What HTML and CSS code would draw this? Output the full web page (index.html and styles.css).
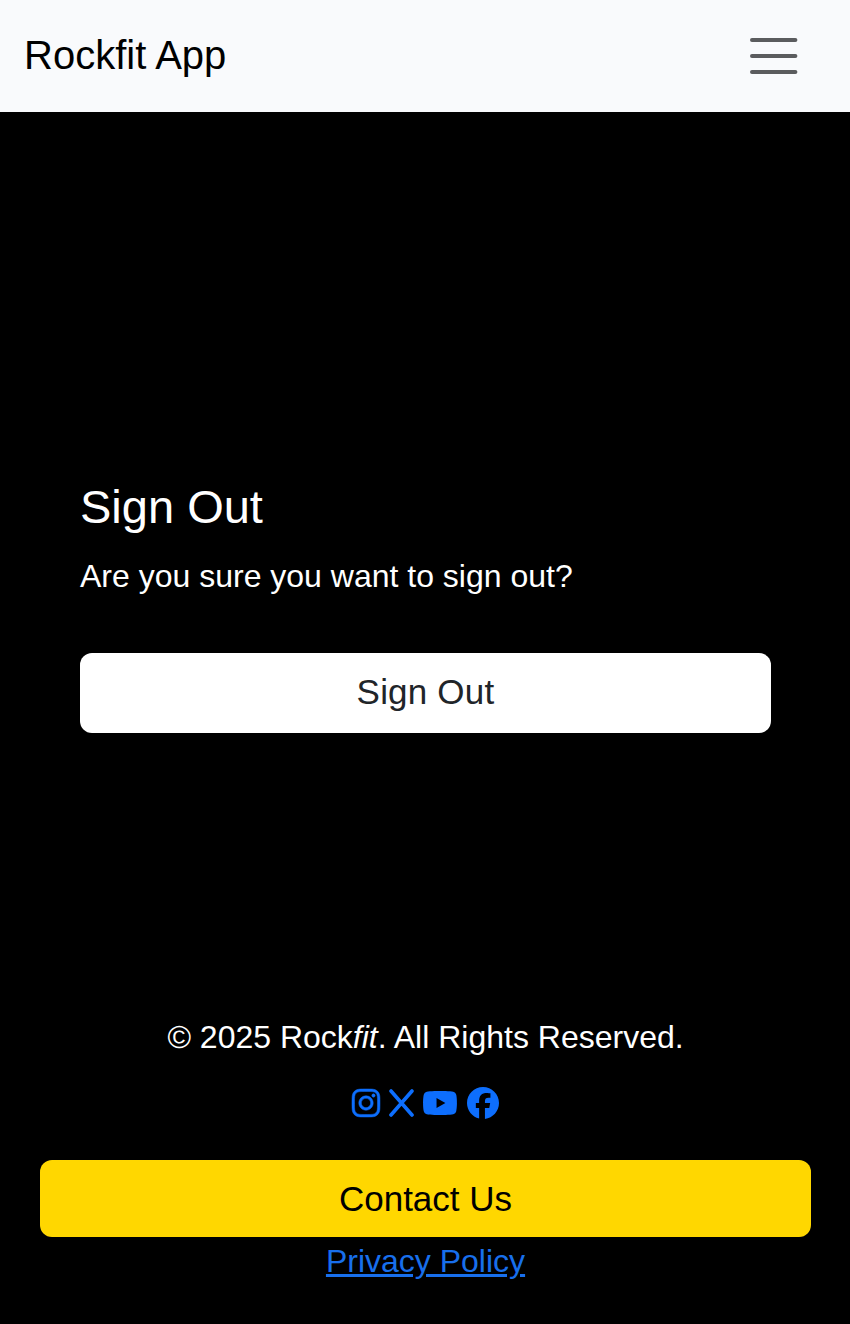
FILE: index.html
```html
<!DOCTYPE html>
<html lang="en">
<head>
<meta charset="utf-8">
<title>Rockfit App</title>
<link rel="stylesheet" href="styles.css">
</head>
<body>
<header class="navbar">
  <a class="brand">Rockfit App</a>
  <button class="toggler" aria-label="Menu">
    <svg width="60" height="60" viewBox="0 0 30 30"><path d="M4 7h21.700M4 15h21.700M4 23h21.700" stroke="#5b5c5e" stroke-width="2" stroke-linecap="round"/></svg>
  </button>
</header>
<main class="content">
  <h1 class="title">Sign Out</h1>
  <p class="question">Are you sure you want to sign out?</p>
  <button class="btn signout">Sign Out</button>
</main>
<footer class="footer">
  <p class="copyright">© 2025 Rock<em>fit</em>. All Rights Reserved.</p>
  <div class="social">
    <svg class="instagram" viewBox="0 0 448 512"><path d="M224.100 141c-63.600 0-114.900 51.300-114.900 114.900s51.300 114.900 114.900 114.900S339 319.500 339 255.900 287.700 141 224.100 141zm0 189.600c-41.100 0-74.700-33.500-74.700-74.700s33.500-74.700 74.700-74.700 74.700 33.500 74.700 74.700-33.600 74.700-74.700 74.700zm146.400-194.300c0 14.900-12 26.800-26.800 26.800-14.900 0-26.800-12-26.800-26.800s12-26.800 26.800-26.800 26.800 12 26.800 26.800zm76.100 27.200c-1.700-35.900-9.900-67.700-36.200-93.900-26.200-26.200-58-34.400-93.900-36.200-37-2.100-147.900-2.100-184.900 0-35.800 1.700-67.600 9.900-93.900 36.100s-34.400 58-36.200 93.900c-2.100 37-2.100 147.900 0 184.900 1.700 35.900 9.900 67.700 36.200 93.900s58 34.400 93.900 36.200c37 2.100 147.900 2.100 184.900 0 35.900-1.700 67.700-9.900 93.900-36.200 26.200-26.200 34.400-58 36.200-93.900 2.100-37 2.100-147.800 0-184.800zM398.800 388c-7.800 19.600-22.900 34.700-42.600 42.600-29.500 11.700-99.500 9-132.100 9s-102.700 2.600-132.100-9c-19.600-7.800-34.700-22.900-42.600-42.600-11.700-29.500-9-99.500-9-132.100s-2.600-102.700 9-132.100c7.800-19.600 22.900-34.700 42.600-42.600 29.500-11.700 99.500-9 132.100-9s102.700-2.600 132.100 9c19.600 7.800 34.700 22.900 42.600 42.600 11.700 29.500 9 99.500 9 132.100s2.700 102.700-9 132.100z"/></svg>
    <svg class="x" viewBox="0 0 25 28"><path d="M2 2 23 26M23 2 2 26" stroke="currentColor" stroke-width="3.600" stroke-linecap="round"/></svg>
    <svg class="youtube" viewBox="14 64 548 384"><path d="M549.700 124.100c-6.300-23.700-24.800-42.300-48.300-48.600C458.800 64 288 64 288 64S117.200 64 74.600 75.500c-23.500 6.300-42 24.900-48.300 48.600-11.400 42.900-11.400 132.300-11.400 132.300s0 89.400 11.400 132.300c6.300 23.700 24.800 41.500 48.300 47.800C117.200 448 288 448 288 448s170.800 0 213.400-11.500c23.500-6.300 42-24.200 48.300-47.800 11.400-42.900 11.400-132.300 11.400-132.300s0-89.400-11.400-132.300zM232.200 337.600V175.200l142.700 81.200z"/></svg>
    <svg class="facebook" viewBox="0 0 512 512"><path d="M512 256C512 114.600 397.400 0 256 0S0 114.600 0 256c0 120 82.700 220.800 194.200 248.500V334.200h-52.800V256h52.800v-33.700c0-87.100 39.400-127.500 125-127.500 16.200 0 44.200 3.200 55.700 6.400V172c-6-.6-16.500-1-29.600-1-42 0-58.200 15.900-58.200 57.200V256h83.600l-14.400 78.200h-69.300v175.900C413.800 494.800 512 386.900 512 256z"/></svg>
  </div>
  <button class="btn contact">Contact Us</button>
  <a class="privacy" href="#">Privacy Policy</a>
</footer>
</body>
</html>
```
FILE: styles.css
```css
* { box-sizing: border-box; }
body {
  margin: 0;
  height: 1324px;
  display: flex;
  flex-direction: column;
  background: #000;
  color: #fff;
  font: 32px/48px "Liberation Sans", Arial, sans-serif;
}
p, h1 { margin: 0; font-weight: 400; }
.navbar {
  height: 112px;
  flex: none;
  display: flex;
  align-items: center;
  justify-content: space-between;
  padding: 0 46px 0 24px;
  background: #f9fafc;
}
.brand { color: #000; font-size: 40px; padding-bottom: 2px; }
.toggler { display: flex; padding: 0; border: 0; background: none; }
.toggler svg { fill: none; }
.content {
  flex: 1;
  padding: 367px 79px 0 80px;
}
.title { font-size: 47px; line-height: 56px; margin-bottom: 17px; }
.question { margin-bottom: 53px; }
.btn {
  display: block;
  width: 100%;
  border: 0;
  border-radius: 12px;
  font: 35px/52px "Liberation Sans", Arial, sans-serif;
}
.signout {
  height: 80px;
  padding: 0 0 2px;
  background: #fff;
  color: #212529;
  letter-spacing: 0.2px;
}
.footer {
  height: 311px;
  flex: none;
  padding: 0 39px 0 40px;
  text-align: center;
}
.social {
  display: flex;
  align-items: center;
  justify-content: center;
  height: 32px;
  margin: 26px 0 41px;
  color: #0d6efd;
}
.social svg { fill: currentColor; }
.instagram { width: 28px; height: 32px; overflow: visible; stroke: currentColor; stroke-width: 8; }
.x { width: 25px; height: 28px; margin-left: 9px; }
.youtube { width: 34px; height: 24px; margin-left: 9px; }
.facebook { width: 32px; height: 32px; margin-left: 10px; }
.contact { height: 77px; background: #ffd700; color: #000; }
.privacy { color: #186fec; text-decoration-thickness: 3px; }
```
